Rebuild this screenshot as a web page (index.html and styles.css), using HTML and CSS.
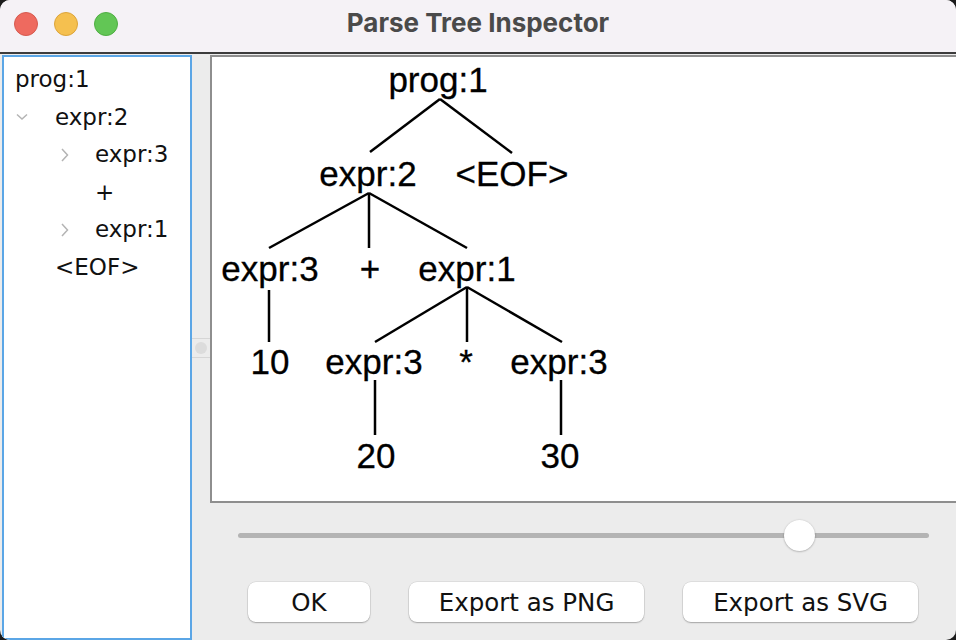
FILE: index.html
```html
<!DOCTYPE html>
<html>
<head>
<meta charset="utf-8">
<title>Parse Tree Inspector</title>
<link rel="stylesheet" href="styles.css">
</head>
<body>
<div class="window">
  <div class="titlebar">
    <div class="lights">
      <span class="light red"></span>
      <span class="light yellow"></span>
      <span class="light green"></span>
    </div>
    <div class="title">Parse Tree Inspector</div>
  </div>
  <div class="main">
    <div class="treepanel">
      <div class="row"><span class="label">prog:1</span></div>
      <div class="row">
        <span class="slot"><svg class="chev" width="20" height="16" viewBox="0 0 20 16"><path d="M6 5.5 L11 10 L16 5.5" fill="none" stroke="#b4b4b4" stroke-width="1.5"/></svg></span>
        <span class="label">expr:2</span>
      </div>
      <div class="row">
        <span class="slot"></span>
        <span class="slot"><svg class="chev" width="20" height="16" viewBox="0 0 20 16"><path d="M11 2 L16.5 8 L11 14" fill="none" stroke="#b4b4b4" stroke-width="1.5"/></svg></span>
        <span class="label">expr:3</span>
      </div>
      <div class="row">
        <span class="slot"></span>
        <span class="slot"></span>
        <span class="label">+</span>
      </div>
      <div class="row">
        <span class="slot"></span>
        <span class="slot"><svg class="chev" width="20" height="16" viewBox="0 0 20 16"><path d="M11 2 L16.5 8 L11 14" fill="none" stroke="#b4b4b4" stroke-width="1.5"/></svg></span>
        <span class="label">expr:1</span>
      </div>
      <div class="row">
        <span class="slot"></span>
        <span class="label">&lt;EOF&gt;</span>
      </div>
    </div>
    <div class="divider">
      <div class="knob"><span class="dot"></span></div>
    </div>
    <div class="rightcol">
      <div class="canvas">
        <svg class="tree" width="744" height="446" viewBox="212 57 744 446">
          <g stroke="#000" stroke-width="2.5" stroke-linecap="butt">
            <line x1="440" y1="99" x2="370" y2="152"/>
            <line x1="440" y1="99" x2="512" y2="153"/>
            <line x1="369" y1="193" x2="269" y2="248"/>
            <line x1="369" y1="193" x2="369" y2="248"/>
            <line x1="369" y1="193" x2="467" y2="248"/>
            <line x1="269" y1="290" x2="269" y2="342"/>
            <line x1="467" y1="287" x2="375" y2="342"/>
            <line x1="467" y1="287" x2="467" y2="342"/>
            <line x1="467" y1="287" x2="562" y2="342"/>
            <line x1="375" y1="380" x2="375" y2="435"/>
            <line x1="561" y1="380" x2="561" y2="435"/>
          </g>
          <g class="nodes" text-anchor="middle">
            <text x="438" y="92">prog:1</text>
            <text x="368" y="186">expr:2</text>
            <text x="512" y="186">&lt;EOF&gt;</text>
            <text x="270" y="281">expr:3</text>
            <text x="370" y="281">+</text>
            <text x="467" y="281">expr:1</text>
            <text x="270" y="374">10</text>
            <text x="374" y="374">expr:3</text>
            <text x="466" y="374">*</text>
            <text x="559" y="374">expr:3</text>
            <text x="376" y="468">20</text>
            <text x="560" y="468">30</text>
          </g>
        </svg>
      </div>
      <div class="sliderarea">
        <div class="track">
          <div class="fill" style="width: 81.2%"></div>
          <span class="thumb"></span>
        </div>
      </div>
      <div class="buttons">
        <button class="btn btn-ok">OK</button>
        <button class="btn">Export as PNG</button>
        <button class="btn">Export as SVG</button>
      </div>
    </div>
  </div>
</div>
</body>
</html>
```
FILE: styles.css
```css
* { box-sizing: border-box; }
html, body {
  margin: 0;
  padding: 0;
  background: #1c1c1c;
  width: 956px;
  height: 640px;
  overflow: hidden;
}
.window {
  width: 956px;
  height: 640px;
  background: #ececec;
  border-radius: 10px;
  overflow: hidden;
  display: flex;
  flex-direction: column;
}
.titlebar {
  height: 54px;
  flex: none;
  background: #f5f2f6;
  border-bottom: 2px solid #3c3c3c;
  display: flex;
  align-items: center;
  position: relative;
}
.lights {
  display: flex;
  gap: 16px;
  padding-left: 14px;
  margin-top: -4px;
}
.light {
  width: 24px;
  height: 24px;
  border-radius: 50%;
  display: block;
}
.red { background: #ee6a5f; border: 1px solid #d65a4f; }
.yellow { background: #f5c04f; border: 1px solid #dca43a; }
.green { background: #62c655; border: 1px solid #4fae43; }
.title {
  position: absolute;
  left: 0;
  right: 0;
  top: 7px;
  text-align: center;
  font-family: Inter, "Noto Sans", sans-serif;
  font-weight: 700;
  font-size: 26px;
  color: #4a4a4a;
}
.main {
  flex: 1;
  display: flex;
  padding-top: 1px;
  min-height: 0;
}
.treepanel {
  width: 190px;
  margin-left: 2px;
  background: #fff;
  border: 2px solid #5ba6e6;
  padding-top: 4px;
  padding-left: 7px;
  font-family: "DejaVu Sans", sans-serif;
  font-size: 23px;
  color: #111;
}
.row {
  display: flex;
  align-items: center;
  height: 37.5px;
  line-height: 37.5px;
}
.slot {
  width: 40px;
  flex: none;
  display: flex;
  align-items: center;
}
.chev { display: block; }
.label { padding-left: 4px; white-space: nowrap; }
.divider {
  width: 18px;
  flex: none;
  display: flex;
  flex-direction: column;
  justify-content: center;
}
.knob {
  height: 20px;
  border-top: 1px solid #d6d6d6;
  border-bottom: 1px solid #d6d6d6;
  display: flex;
  align-items: center;
  justify-content: center;
}
.dot {
  width: 12px;
  height: 12px;
  border-radius: 50%;
  background: #dcdcdc;
  display: block;
}
.rightcol {
  flex: 1;
  display: flex;
  flex-direction: column;
}
.canvas {
  height: 448px;
  flex: none;
  background: #fff;
  border: 2px solid #8e8e8e;
  border-right: none;
  overflow: hidden;
}
.tree { display: block; }
.nodes {
  font-family: "Liberation Sans", Arial, sans-serif;
  font-size: 35px;
  fill: #000;
  stroke: #000;
  stroke-width: 0.3px;
}
.sliderarea {
  height: 79px;
  flex: none;
  padding: 30px 27px 0 28px;
  display: flex;
  align-items: flex-start;
}
.track {
  flex: 1;
  height: 5px;
  background: #b4b4b4;
  border-radius: 3px;
  display: flex;
  align-items: center;
}
.fill { height: 5px; }
.thumb {
  width: 31px;
  height: 31px;
  margin-left: -15px;
  border-radius: 50%;
  background: #fff;
  box-shadow: 0 0.5px 2px rgba(0,0,0,0.35);
  display: block;
  flex: none;
}
.buttons {
  display: flex;
  justify-content: space-between;
  align-items: flex-start;
  padding: 0 38px;
}
.btn {
  height: 40px;
  min-width: 122px;
  padding: 0 30px;
  background: #fff;
  border: none;
  border-radius: 8px;
  box-shadow: 0 0 0 0.5px rgba(0,0,0,0.12), 0 1px 1.5px rgba(0,0,0,0.25);
  font-family: "DejaVu Sans", sans-serif;
  font-size: 24.5px;
  color: #111;
}
```
